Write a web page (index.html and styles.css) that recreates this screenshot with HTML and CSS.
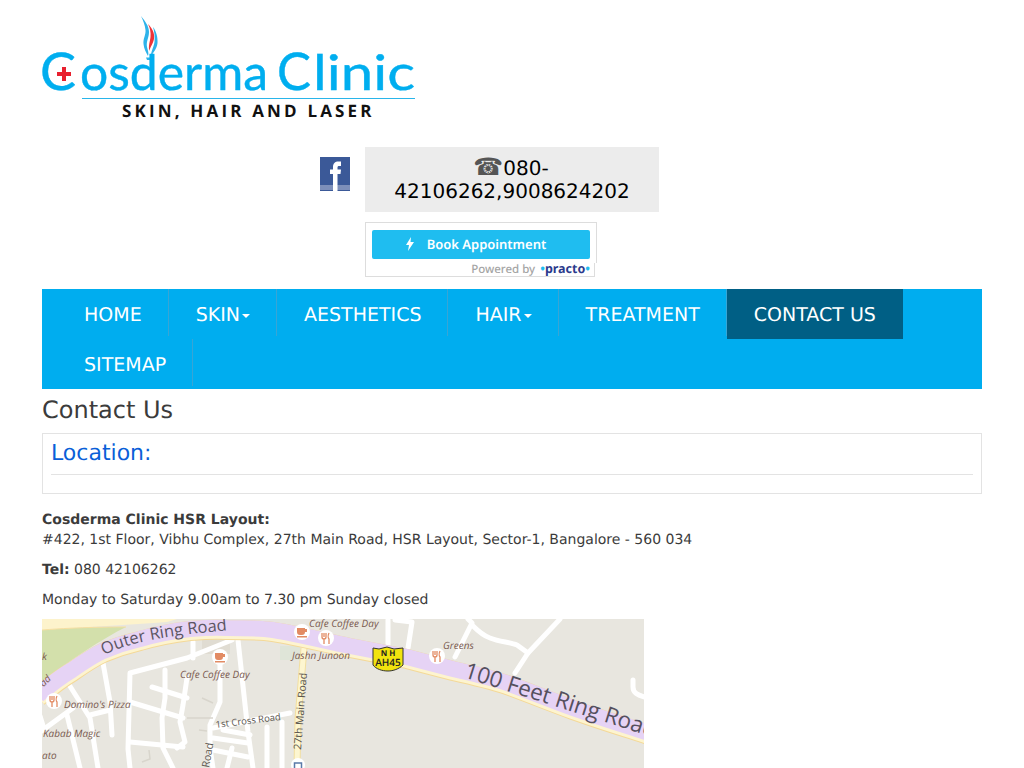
FILE: index.html
```html
<!DOCTYPE html>
<html lang="en">
<head>
    <meta charset="UTF-8">
    <meta name="viewport" content="width=device-width, initial-scale=1.0">
    <title>Contact Us - Cosderma Clinic</title>
    <link rel="stylesheet" href="styles.css">
</head>
<body>
    <div class="container">
        <header class="header">
            <svg class="logo" width="384" height="112" viewBox="-4 0 384 112">
                <path d="M98 6C102 11 106 16 106 22C106 28 103 31 104 37C105 41 106 43 105 46C103 42 101 39 100.500 34C100 28 103 25 102.500 20C102 15 100 10 98 6Z" fill="#2eb3ea"/>
                <path d="M105 14C109 18 112 23 111 29C110 34 107 37 106.500 41C105 36 107 32 107.500 27C108 22 107 18 105 14Z" fill="#ee3338"/>
                <path d="M110 17C113 21 115 27 114.500 33C114 39 110 42 108 47C107.500 42 110.500 38 111.500 32C112 27 111.500 22 110 17Z" fill="#2eb3ea"/>
                <path d="M103 47.500h8l-1 2.500h-6z" fill="#2eb3ea"/>
                <text class="logo-cap" x="-3" y="80" textLength="36" lengthAdjust="spacingAndGlyphs">C</text>
                <text class="logo-word" x="37" y="80" textLength="188" lengthAdjust="spacingAndGlyphs">osderma</text>
                <text class="logo-cap" x="234" y="80" textLength="34" lengthAdjust="spacingAndGlyphs">C</text>
                <text class="logo-word" x="270" y="80" textLength="102" lengthAdjust="spacingAndGlyphs">linic</text>
                <path d="M14 62h5v-5h4v5h5v4h-5v5h-4v-5h-5z" fill="#e8202e"/>
                <rect x="39" y="88" width="333" height="1" fill="#29b5ea"/>
                <text class="logo-tag" x="79" y="107" textLength="251">SKIN, HAIR AND LASER</text>
            </svg>

            <div class="contact-row">
                <a class="fb" href="#">
                    <svg width="30" height="34" viewBox="0 0 30 34">
                        <rect width="30" height="34" fill="#3b5998"/>
                        <rect y="28" width="30" height="5" fill="#7d8fba"/>
                        <path d="M13 34V17H10V12.500H13V10C13 6.500 15 4.500 18.500 4.500H21V9H19C18 9 17.500 9.500 17.500 10.500V12.500H21L20.500 17H17.500V34Z" fill="#fff"/>
                    </svg>
                </a>
                <div class="phone"><span class="phone-icon">☎</span>080-42106262,9008624202</div>
            </div>

            <div class="practo-row">
                <a class="practo" href="#">
                    <span class="practo-top">
                        <span class="practo-btn">
                            <svg width="8" height="14" viewBox="0 0 8 14"><path d="M5 0L0 8H3L2 14L8 5H4.500Z" fill="#fff"/></svg>
                            Book Appointment
                        </span>
                    </span>
                    <span class="practo-by">Powered by <b><i>•</i>practo<i>•</i></b></span>
                </a>
            </div>
        </header>

        <nav class="nav">
            <ul>
                <li><a href="#">HOME</a></li>
                <li><a href="#">SKIN<span class="caret"></span></a></li>
                <li><a href="#">AESTHETICS</a></li>
                <li><a href="#">HAIR<span class="caret"></span></a></li>
                <li><a href="#">TREATMENT</a></li>
                <li class="active"><a href="#">CONTACT US</a></li>
                <li><a href="#">SITEMAP</a></li>
            </ul>
        </nav>

        <h1>Contact Us</h1>

        <div class="panel">
            <h2>Location:</h2>
            <hr>
        </div>

        <p><b>Cosderma Clinic HSR Layout:</b><br>#422, 1st Floor, Vibhu Complex, 27th Main Road, HSR Layout, Sector-1, Bangalore - 560 034</p>
        <p><b>Tel:</b> 080 42106262</p>
        <p class="hours">Monday to Saturday 9.00am to 7.30 pm Sunday closed</p>

        <svg class="map" width="602" height="149" viewBox="0 0 602 149">
            <defs>
                <path id="ring" d="M-4 76C8 66 18 58 30 51C40 44 50 37 61 32C73 27 85 23 98 20C115 15 131 12 148 10C160 9 172 8 185 9C200 9 216 9 231 11C257 15 283 22 308 27L365 38C380 42 396 46 411 50C429 54 447 58 465 64C487 72 509 81 531 89C553 97 576 104 610 115"/>
                <path id="outer-label" d="M62 36C90 22 130 16 190 11"/>
                <path id="feet-label" d="M421 58L607 117"/>
            </defs>
            <rect width="602" height="149" fill="#e8e6df"/>

            <!-- park and top road -->
            <path d="M0 11C40 8 70 8 84 8C60 20 30 40 0 62Z" fill="#d3e0ab"/>
            <path d="M0 0H135L125 3C90 6 40 8 0 11Z" fill="#fdf3cc"/>
            <path d="M0 11C40 8 70 8 84 8" fill="none" stroke="#f6dfa0"/>
            <rect x="238" y="27" width="20" height="14" fill="#dfe5d8"/>
            <rect x="160" y="21" width="28" height="14" fill="#e0dcd2"/>

            <!-- white streets -->
            <g fill="none" stroke="#fff" stroke-width="5" stroke-linejoin="round" stroke-linecap="round">
                <path d="M190 21L145 39L88 54L86 130L88 149"/>
                <path d="M151 23V39"/>
                <path d="M196 21L206 113L211 149"/>
                <path d="M178 46V83L168 106V129L171 149"/>
                <path d="M123 51V79L120 99L121 129L131 149"/>
                <path d="M145 59L141 86L138 103L143 123L135 129"/>
                <path d="M110 68L145 79"/>
                <path d="M88 83L141 99"/>
                <path d="M88 123L141 128"/>
                <path d="M61 44L68 83L70 116"/>
                <path d="M26 64L48 99L56 149"/>
                <path d="M68 91L48 96"/>
                <path d="M-2 113L31 89"/>
                <path d="M25 96L38 149"/>
                <path d="M171 109L248 94"/>
                <path d="M181 111L208 116"/>
                <path d="M171 119L206 124"/>
                <path d="M171 131L206 138"/>
                <path d="M190 129L185 149"/>
                <path d="M225 108V149"/>
                <path d="M240 103V149"/>
                <path d="M-2 97L2 110"/>
                <path d="M346 1V26"/>
                <path d="M353 1L370 3L366 29"/>
                <path d="M413 38L430 4L426 0"/>
                <path d="M430 6C438 14 442 17 448 19C458 23 468 23 475 26L486 34L473 54"/>
                <path d="M486 34L518 0"/>
                <path d="M591 61V68C591 74 596 76 602 78"/>
            </g>
            <g fill="none" stroke="#d8d5cc" stroke-width="1.500">
                <path d="M160 79L171 84"/>
                <path d="M145 99H171"/>
                <path d="M157 111L165 112"/>
                <path d="M100 143L108 140L107 131"/>
            </g>

            <!-- 27th main road -->
            <path d="M262 29L256 100L255 149" fill="none" stroke="#f2dfa0" stroke-width="7"/>
            <path d="M262 29L256 100L255 149" fill="none" stroke="#fdf6d0" stroke-width="5"/>

            <!-- ring road -->
            <use href="#ring" class="ring-edge"/>
            <use href="#ring" class="ring-fill"/>
            <use href="#ring" class="ring-top"/>

            <!-- road labels -->
            <text class="road-big"><textPath href="#outer-label">Outer Ring Road</textPath></text>
            <text class="road-huge"><textPath href="#feet-label">100 Feet Ring Road</textPath></text>
            <text class="road-small" transform="translate(259 131) rotate(-85.600)">27th Main Road</text>
            <text class="road-small" transform="translate(167 149) rotate(-80)">Road</text>
            <text class="road-tiny" transform="translate(174 109) rotate(-7)">1st Cross Road</text>

            <!-- places -->
            <g class="place">
                <text x="267" y="8">Cafe Coffee Day</text>
                <text x="250" y="40">Jashn Junoon</text>
                <text x="401" y="30">Greens</text>
                <text x="138" y="59">Cafe Coffee Day</text>
                <text x="22" y="89">Domino's Pizza</text>
                <text x="1" y="118">Kabab Magic</text>
                <text x="0" y="140">ato</text>
                <text x="0" y="41">k</text>
                <text x="-1" y="66" transform="rotate(-45 3 64)">ad</text>
            </g>

            <!-- poi markers -->
            <g fill="#fff">
                <circle cx="260" cy="13" r="8"/>
                <circle cx="284" cy="19" r="8"/>
                <circle cx="178" cy="38" r="8"/>
                <circle cx="395" cy="37" r="8"/>
                <circle cx="12" cy="82" r="8"/>
                <circle cx="256" cy="146" r="7"/>
            </g>
            <rect x="252.500" y="144" width="7" height="6" fill="#fff" stroke="#5a7aa8" stroke-width="1.500"/>
            <g fill="#e28b63">
                <path d="M255 9h8v4c0 2-1 3-3 3h-2c-2 0-3-1-3-3zM263 10h2v3h-2zM255 17h10v1.500h-10z"/>
                <path d="M173 34h8v4c0 2-1 3-3 3h-2c-2 0-3-1-3-3zM181 35h2v3h-2zM173 42h10v1.500h-10z"/>
            </g>
            <g fill="none" stroke="#e28b63" stroke-width="1.300">
                <path d="M280 14v4c0 1 1 2 2 2v5M282 14v4M284 14v4c0 1-1 2-2 2M287 14c-1 2-1 5 0 6v5"/>
                <path d="M391 32v4c0 1 1 2 2 2v5M393 32v4M395 32v4c0 1-1 2-2 2M398 32c-1 2-1 5 0 6v5"/>
                <path d="M8 77v4c0 1 1 2 2 2v5M10 77v4M12 77v4c0 1-1 2-2 2M15 77c-1 2-1 5 0 6v5"/>
            </g>

            <!-- highway shield -->
            <path d="M331 29L337 30L345 28L352 30L361 29V46C357 50 351 52 346 52C340 52 334 50 331 46Z" fill="#f1e30e" stroke="#333"/>
            <text class="shield-top" x="346" y="37" text-anchor="middle">N H</text>
            <text class="shield" x="346" y="47" text-anchor="middle">AH45</text>
        </svg>
    </div>
</body>
</html>
```

FILE: styles.css
```css
html, body {
    margin: 0;
    overflow: hidden;
}
body {
    font-family: "DejaVu Sans", sans-serif;
    font-size: 14px;
    line-height: 20px;
    color: #3b3b3b;
    background: #fff;
    text-rendering: geometricPrecision;
}
.container {
    width: 940px;
    margin: 0 auto;
}
.header {
    padding-top: 10px;
}
.logo {
    display: block;
    margin-left: -3px;
}
.logo-word {
    font-family: "Lato", sans-serif;
    font-size: 49px;
    fill: #00aeef;
    stroke: #00aeef;
    stroke-width: 0.400px;
}
.logo-cap {
    font-family: "Lato", sans-serif;
    font-size: 52px;
    fill: #00aeef;
    stroke: #00aeef;
    stroke-width: 0.400px;
}
.logo-tag {
    font-family: "Open Sans", sans-serif;
    font-size: 17px;
    font-weight: 700;
    letter-spacing: 1.500px;
    fill: #111;
}
.contact-row {
    display: flex;
    margin-top: 25px;
    padding-left: 278px;
}
.fb {
    display: block;
    width: 45px;
    padding-top: 10px;
}
.fb svg {
    display: block;
}
.phone {
    width: 294px;
    padding: 10px 20px 9px;
    box-sizing: border-box;
    background: #ececec;
    font-size: 20px;
    line-height: 23px;
    color: #000;
    text-align: center;
}
.phone-icon {
    margin-left: -2px;
    font-size: 24px;
    line-height: 0;
    color: #555;
}
.practo-row {
    margin-top: 10px;
    padding-left: 323px;
}
.practo {
    display: block;
    width: 232px;
    font-family: "Noto Sans", sans-serif;
    text-decoration: none;
}
.practo-top {
    display: block;
    height: 41px;
    box-sizing: border-box;
    padding: 7px 6px 0;
    border: 1px solid #ddd;
    border-bottom: 0;
}
.practo-btn {
    display: flex;
    align-items: center;
    justify-content: center;
    gap: 13px;
    height: 29px;
    box-sizing: border-box;
    padding: 0 10px 2px 0;
    border-radius: 2px;
    background: #1fbdf0;
    color: #fff;
    font-size: 13px;
    font-weight: 600;
}
.practo-by {
    display: block;
    width: 230px;
    height: 14px;
    box-sizing: border-box;
    padding-right: 4px;
    border: 1px solid #ddd;
    border-top: 0;
    text-align: right;
    font-size: 11.500px;
    font-weight: 500;
    line-height: 12px;
    color: #a5a5a5;
}
.practo-by b {
    color: #2b3a8c;
    font-size: 12.500px;
    margin-left: 2px;
}
.practo-by i {
    color: #1fbdf0;
    font-style: normal;
}
.nav {
    margin-top: 12px;
    background: #00adef;
}
.nav ul {
    display: flex;
    flex-wrap: wrap;
    margin: 0;
    padding: 0 0 0 15px;
    list-style: none;
}
.nav li {
    position: relative;
    height: 50px;
}
.nav li::after {
    content: "";
    position: absolute;
    top: 0;
    right: 0;
    width: 1px;
    height: 47px;
    background: #38a5d5;
}
.nav a {
    display: block;
    padding: 1px 27px 0;
    font-size: 19px;
    line-height: 50px;
    color: #fff;
    text-decoration: none;
}
.nav li.active {
    height: 50px;
    background: #005f85;
}
.nav li.active::after {
    display: none;
}
.caret {
    display: inline-block;
    margin-left: 2px;
    vertical-align: middle;
    border-top: 4px solid #fff;
    border-left: 4px solid transparent;
    border-right: 4px solid transparent;
}
h1 {
    margin: 8px 0 10px;
    font-size: 24px;
    line-height: 26px;
    font-weight: 400;
}
.panel {
    height: 59px;
    padding: 0 8px;
    margin-bottom: 16px;
    border: 1px solid #e3e3e3;
}
.panel h2 {
    margin: 8px 0 8px;
    font-size: 22px;
    line-height: 24px;
    font-weight: 400;
    color: #0a5fd8;
}
.panel hr {
    margin: 0;
    border: 0;
    border-top: 1px solid #e3e3e3;
}
p {
    margin: 0 0 10px;
}
.hours {
    margin-bottom: 9px;
}
.map {
    display: block;
    font-family: "Open Sans", sans-serif;
}
.ring-edge {
    fill: none;
    stroke: #f4d998;
    stroke-width: 20px;
    transform: translateY(2px);
}
.ring-fill {
    fill: none;
    stroke: #fdf4cf;
    stroke-width: 18px;
    transform: translateY(2px);
}
.ring-top {
    fill: none;
    stroke: #e6d3f5;
    stroke-width: 16px;
}
.road-big {
    font-size: 16.500px;
    fill: #5b5563;
}
.road-huge {
    font-size: 22.500px;
    fill: #55505e;
}
.road-small {
    font-size: 10.500px;
    fill: #5b5650;
}
.road-tiny {
    font-size: 9.500px;
    fill: #5b5650;
}
.place text {
    font-size: 10px;
    font-style: italic;
    fill: #7a5a50;
}
.shield-top {
    font-size: 8px;
    font-weight: 700;
    fill: #222;
}
.shield {
    font-size: 10px;
    font-weight: 600;
    fill: #222;
}
```
